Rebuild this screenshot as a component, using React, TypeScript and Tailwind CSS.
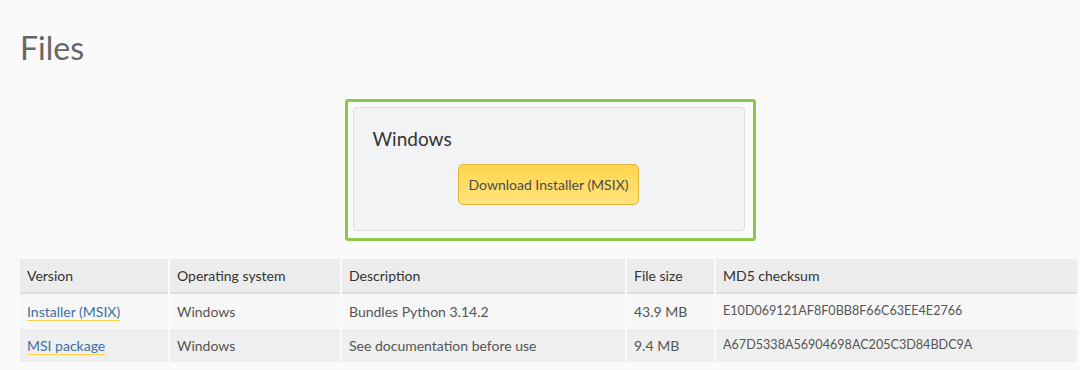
import React from "react";

const rows = [
  { v: "Installer (MSIX)", os: "Windows", d: "Bundles Python 3.14.2", s: "43.9 MB", m: "E10D069121AF8F0BB8F66C63EE4E2766", bg: "bg-[#f7f7f7]" },
  { v: "MSI package", os: "Windows", d: "See documentation before use", s: "9.4 MB", m: "A67D5338A56904698AC205C3D84BDC9A", bg: "bg-[#efefef]" },
];

export default function App() {
  return (
    <div className="w-[1080px] h-[370px] bg-[#fafafa] overflow-hidden text-[#555]" style={{ fontFamily: "Lato, 'Noto Sans', sans-serif" }}>
      <h1 className="pl-[20px] pt-[28px] text-[32px] leading-[40px] text-[#666] font-normal">Files</h1>
      <div className="flex justify-center mt-[31px]">
        <div className="ml-[20px] w-[411px] h-[142px] border-[3px] border-[#8cc84b] rounded-[3px] p-[5px] pr-[8px] pb-[7px]">
          <div className="h-full bg-[#f2f3f5] border border-[#dcdcdc] rounded-[4px] pt-[18px] pl-[19px]">
            <div className="text-[19px] leading-[26px] text-[#333]">Windows</div>
            <div className="flex justify-center mt-[12px] pr-[19px]">
              <div className="w-[181px] h-[41px] flex items-center justify-center rounded-[5px] border border-[#e3b53a] bg-gradient-to-b from-[#ffd64d] to-[#ffe27a] text-[14px] text-[#4b4b4b]">
                Download Installer (MSIX)
              </div>
            </div>
          </div>
        </div>
      </div>
      <div className="pl-[20px] pr-[3px] mt-[18px]">
        <div className="grid grid-cols-[148px_170px_283px_87px_1fr] gap-x-[2px] gap-y-[1px] text-[14px]">
          {["Version", "Operating system", "Description", "File size", "MD5 checksum"].map((h, i) => (
            <div key={h} className={`h-[35px] bg-[#ececec] border-b-2 border-[#dddddd] flex items-center pl-[7px] text-[#333] ${i === 4 ? "rounded-tr-[3px]" : ""}`}>{h}</div>
          ))}
          {rows.map((r) => (
            <React.Fragment key={r.v}>
              <div className={`h-[33px] ${r.bg} flex items-center pl-[7px]`}>
                <a className="text-[#3d6fa6] border-b border-[#ffd343] leading-[17px]">{r.v}</a>
              </div>
              <div className={`h-[33px] ${r.bg} flex items-center pl-[7px]`}>{r.os}</div>
              <div className={`h-[33px] ${r.bg} flex items-center pl-[7px]`}>{r.d}</div>
              <div className={`h-[33px] ${r.bg} flex items-center pl-[7px]`}>{r.s}</div>
              <div className={`h-[33px] ${r.bg} flex items-center pl-[7px] text-[12.6px]`}>{r.m}</div>
            </React.Fragment>
          ))}
        </div>
      </div>
    </div>
  );
}
